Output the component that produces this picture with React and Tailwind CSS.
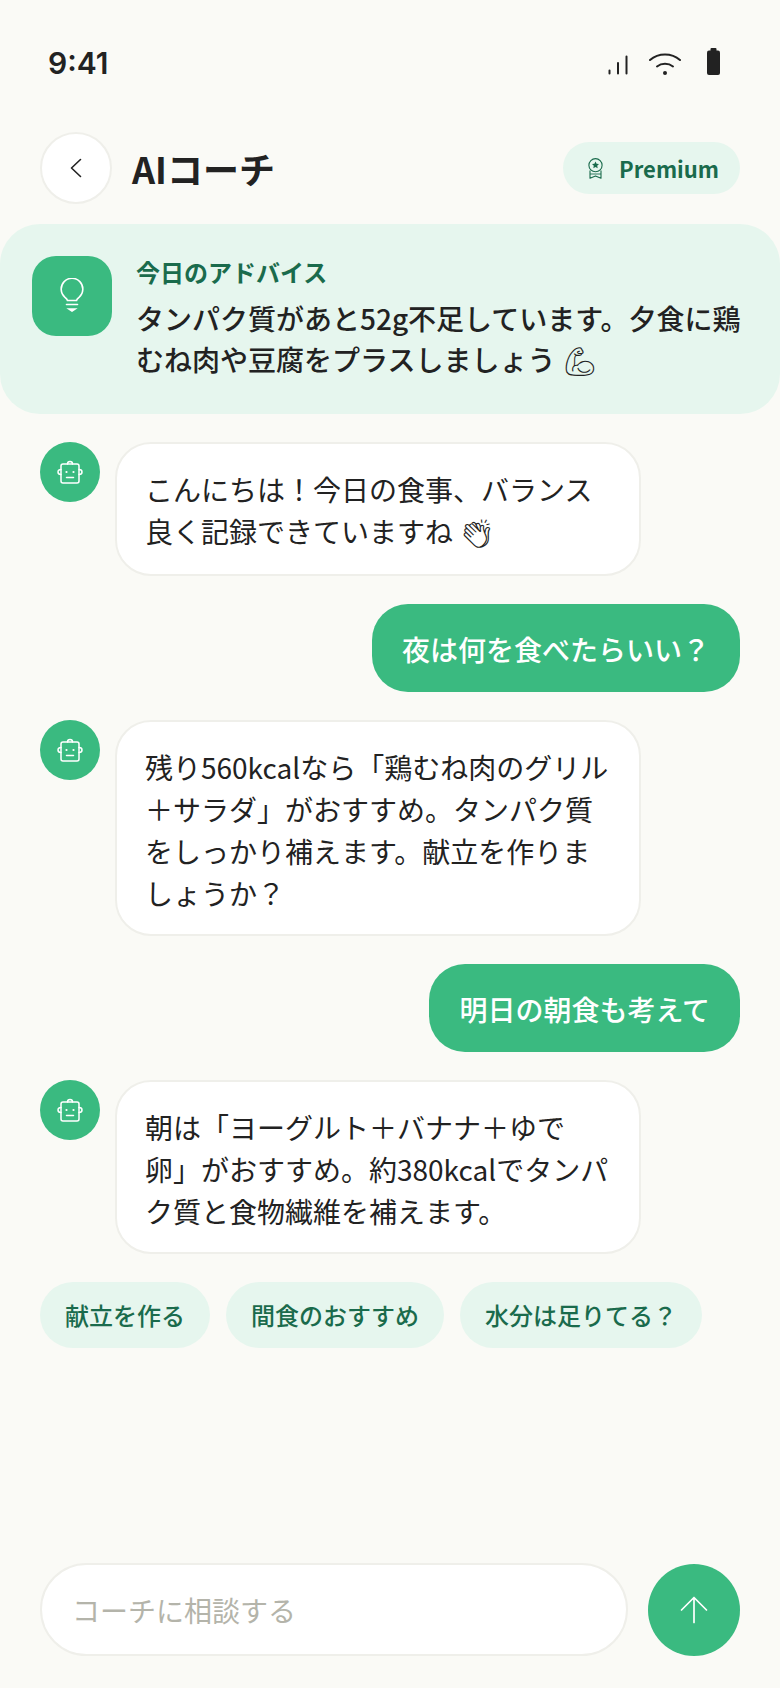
import React from 'react';

const FONT = "font-['Noto_Sans_CJK_JP','Noto_Sans',sans-serif]";

function SignalIcon() {
  return (
    <svg width="20" height="20" viewBox="0 0 20 20" fill="none" stroke="#222" strokeWidth="2" strokeLinecap="round">
      <path d="M1.5 15.5v3M10 8v10.5M18.5 1.5v17" />
    </svg>
  );
}

function WifiIcon() {
  return (
    <svg width="32" height="22" viewBox="0 0 32 22" fill="none" stroke="#222" strokeWidth="2" strokeLinecap="round">
      <path d="M1 7C9.5 -.5 22.5 -.5 31 7" />
      <path d="M8 13.5c4.5-3.6 11.5-3.6 16 0" />
      <circle cx="16" cy="20" r="2" fill="#222" stroke="none" />
    </svg>
  );
}

function BatteryIcon() {
  return (
    <svg width="13" height="27" viewBox="0 0 13 27" fill="#222">
      <rect x="3.5" y="0" width="6" height="4" rx="1" />
      <rect x="0" y="2.5" width="13" height="24.5" rx="2" />
    </svg>
  );
}

function AwardIcon() {
  return (
    <svg width="17" height="21" viewBox="0 0 17 21" fill="none" stroke="#1a6b4c" strokeWidth="1.1" strokeLinejoin="round">
      <circle cx="8.5" cy="7.2" r="6.6" />
      <path d="M8.5 3.6l1.1 2.2 2.4.3-1.8 1.7.5 2.4-2.2-1.2-2.2 1.2.5-2.4-1.8-1.7 2.4-.3z" fill="#1a6b4c" stroke="none" />
      <path d="M3 12.5v7.8l5.5-2.4 5.5 2.4v-7.8" />
      <path d="M3 16h11" strokeWidth="0.9" />
    </svg>
  );
}

function BulbIcon() {
  return (
    <svg width="28" height="36" viewBox="0 0 28 36" fill="none" stroke="#fff" strokeWidth="1.6" strokeLinecap="round">
      <path d="M9.5 22.5c-.3-1.2-1-2-2.5-3.2a10.8 10.8 0 1 1 14 0c-1.5 1.2-2.2 2-2.5 3.2z" />
      <path d="M8.5 26.5h11" />
      <path d="M11 31h6l-3 2z" fill="#fff" />
    </svg>
  );
}

function RobotIcon() {
  return (
    <svg width="28" height="28" viewBox="0 0 28 28" fill="none" stroke="#fff" strokeWidth="1.5" strokeLinecap="round">
      <rect x="5" y="6" width="18" height="19" rx="2" />
      <path d="M11.5 6a2.5 2.5 0 0 1 5 0" />
      <path d="M5 11.5c-1.8 0-3 1-3 2.5s1.2 2.5 3 2.5M23 11.5c1.8 0 3 1 3 2.5s-1.2 2.5-3 2.5" />
      <circle cx="10.5" cy="14" r="1.1" fill="#fff" stroke="none" />
      <circle cx="17.5" cy="14" r="1.1" fill="#fff" stroke="none" />
      <path d="M10.5 19.5h7" />
    </svg>
  );
}

function CoachMessage({ children }) {
  return (
    <div className="flex items-start gap-[15px]">
      <div className="w-[60px] h-[60px] rounded-full bg-[#3aba80] flex items-center justify-center shrink-0">
        <RobotIcon />
      </div>
      <div className="w-[526px] min-h-[134px] bg-white border-2 border-[#efefea] rounded-[36px] px-[28px] pt-[24px] pb-[20px] text-[28px] leading-[42px] text-[#222222] [text-spacing-trim:space-all]">
        {children}
      </div>
    </div>
  );
}

function UserMessage({ children }) {
  return (
    <div className="flex justify-end">
      <div className="bg-[#3aba80] rounded-[36px] px-[30px] pt-[23px] pb-[21px] text-[28px] leading-[44px] font-medium text-white">
        {children}
      </div>
    </div>
  );
}

function Chip({ children }) {
  return (
    <button className="h-[66px] px-[25px] rounded-full bg-[#e6f6ee] text-[24px] font-medium text-[#1a6b4c]">
      {children}
    </button>
  );
}

export default function App() {
  return (
    <div className={`${FONT} w-[780px] h-[1688px] bg-[#fafaf6] flex flex-col overflow-hidden`}>
      <div className="h-[124px] pl-[48px] pr-[60px] pt-[45px] flex items-start justify-between">
        <span className="font-['Inter',sans-serif] text-[30px] leading-[36px] font-semibold text-[#222222]">9:41</span>
        <div className="flex items-end gap-[21px] mt-[3px]">
          <SignalIcon />
          <div className="flex items-end gap-[26px]">
            <WifiIcon />
            <BatteryIcon />
          </div>
        </div>
      </div>

      <div className="h-[72px] mt-[8px] px-[40px] flex items-center justify-between">
        <div className="flex items-center gap-[20px]">
          <button className="w-[72px] h-[72px] rounded-full bg-white border-2 border-[#efefea] flex items-center justify-center">
            <svg width="14" height="20" viewBox="0 0 14 20" fill="none" stroke="#222222" strokeWidth="1.6" strokeLinecap="round" strokeLinejoin="round">
              <path d="M11.5 1.5L2.5 10l9 8.5" />
            </svg>
          </button>
          <h1 className="text-[36px] leading-[44px] font-bold text-[#222222]">AIコーチ</h1>
        </div>
        <div className="h-[52px] pl-[24px] pr-[21px] rounded-full bg-[#e6f6ee] flex items-center gap-[15px]">
          <AwardIcon />
          <span className="text-[22px] font-bold text-[#1a6b4c]">Premium</span>
        </div>
      </div>

      <div className="mt-[20px] h-[190px] rounded-[40px] bg-[#e6f6ee] pl-[32px] pr-[30px] pt-[32px] flex items-start gap-[24px]">
        <div className="w-[80px] h-[80px] rounded-[24px] bg-[#3aba80] flex items-center justify-center shrink-0">
          <BulbIcon />
        </div>
        <div className="min-w-0">
          <div className="text-[24px] leading-[32px] font-bold text-[#1a6b4c]">今日のアドバイス</div>
          <p className="mt-[10px] text-[28px] leading-[41px] font-medium text-[#222222]">
            タンパク質があと52g不足しています。夕食に鶏むね肉や豆腐をプラスしましょう {'\u{1F4AA}\uFE0E'}
          </p>
        </div>
      </div>

      <div className="px-[40px] mt-[28px] flex flex-col gap-[28px]">
        <CoachMessage>こんにちは！今日の食事、バランス良く記録できていますね {'\u{1F44F}\uFE0E'}</CoachMessage>
        <UserMessage>夜は何を食べたらいい？</UserMessage>
        <CoachMessage>残り560kcalなら「鶏むね肉のグリル＋サラダ」がおすすめ。タンパク質をしっかり補えます。献立を作りましょうか？</CoachMessage>
        <UserMessage>明日の朝食も考えて</UserMessage>
        <CoachMessage>朝は「ヨーグルト＋バナナ＋ゆで卵」がおすすめ。約380kcalでタンパク質と食物繊維を補えます。</CoachMessage>
        <div className="flex gap-[16px]">
          <Chip>献立を作る</Chip>
          <Chip>間食のおすすめ</Chip>
          <Chip>水分は足りてる？</Chip>
        </div>
      </div>

      <div className="flex-1" />

      <div className="px-[40px] pb-[32px] flex items-center gap-[20px]">
        <div className="flex-1 h-[93px] bg-white border-2 border-[#efefea] rounded-full px-[30px] flex items-center text-[28px] text-[#b4b4aa]">
          コーチに相談する
        </div>
        <button className="w-[92px] h-[92px] rounded-full bg-[#3aba80] flex items-center justify-center">
          <svg width="28" height="28" viewBox="0 0 28 28" fill="none" stroke="#ffffff" strokeWidth="1.7" strokeLinecap="round" strokeLinejoin="round">
            <path d="M14 26.5V1.5M1.5 14L14 1.5 26.5 14" />
          </svg>
        </button>
      </div>
    </div>
  );
}
